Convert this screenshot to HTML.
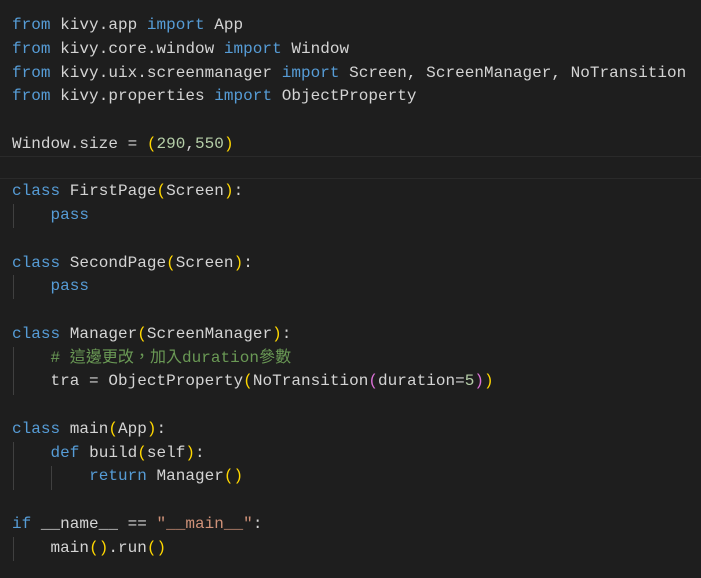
<!DOCTYPE html><html><head><style>
html,body{margin:0;padding:0;background:#1e1e1e;width:701px;height:578px;overflow:hidden}
pre{margin:0;position:absolute;left:12px;top:14px;font-family:"Liberation Mono","Noto Sans CJK TC",monospace;font-size:16px;line-height:23.75px;color:#d4d4d4;letter-spacing:0.03px}
.k{color:#569cd6}.b{color:#569cd6}.n{color:#b5cea8}.y{color:#ffd700}.p{color:#da70d6}.c{color:#6a9955}.s{color:#ce9178}
.g{position:absolute;width:1px;background:#404040}
.cur{position:absolute;left:0;top:156px;width:701px;height:21px;border-top:1px solid #2a2a2a;border-bottom:1px solid #2a2a2a}
</style></head><body>
<div class="cur"></div>
<div class="g" style="left:13px;top:204px;height:24px"></div>
<div class="g" style="left:13px;top:275px;height:24px"></div>
<div class="g" style="left:13px;top:347px;height:48px"></div>
<div class="g" style="left:13px;top:442px;height:48px"></div>
<div class="g" style="left:51px;top:466px;height:24px"></div>
<div class="g" style="left:13px;top:537px;height:24px"></div>
<pre><span class="k">from</span> kivy.app <span class="k">import</span> App
<span class="k">from</span> kivy.core.window <span class="k">import</span> Window
<span class="k">from</span> kivy.uix.screenmanager <span class="k">import</span> Screen, ScreenManager, NoTransition
<span class="k">from</span> kivy.properties <span class="k">import</span> ObjectProperty

Window.size = <span class="y">(</span><span class="n">290</span>,<span class="n">550</span><span class="y">)</span>

<span class="b">class</span> FirstPage<span class="y">(</span>Screen<span class="y">)</span>:
    <span class="b">pass</span>

<span class="b">class</span> SecondPage<span class="y">(</span>Screen<span class="y">)</span>:
    <span class="b">pass</span>

<span class="b">class</span> Manager<span class="y">(</span>ScreenManager<span class="y">)</span>:
    <span class="c"># 這邊更改，加入duration參數</span>
    tra = ObjectProperty<span class="y">(</span>NoTransition<span class="p">(</span>duration=<span class="n">5</span><span class="p">)</span><span class="y">)</span>

<span class="b">class</span> main<span class="y">(</span>App<span class="y">)</span>:
    <span class="b">def</span> build<span class="y">(</span>self<span class="y">)</span>:
        <span class="k">return</span> Manager<span class="y">()</span>

<span class="k">if</span> __name__ == <span class="s">"__main__"</span>:
    main<span class="y">()</span>.run<span class="y">()</span>
</pre>
</body></html>
